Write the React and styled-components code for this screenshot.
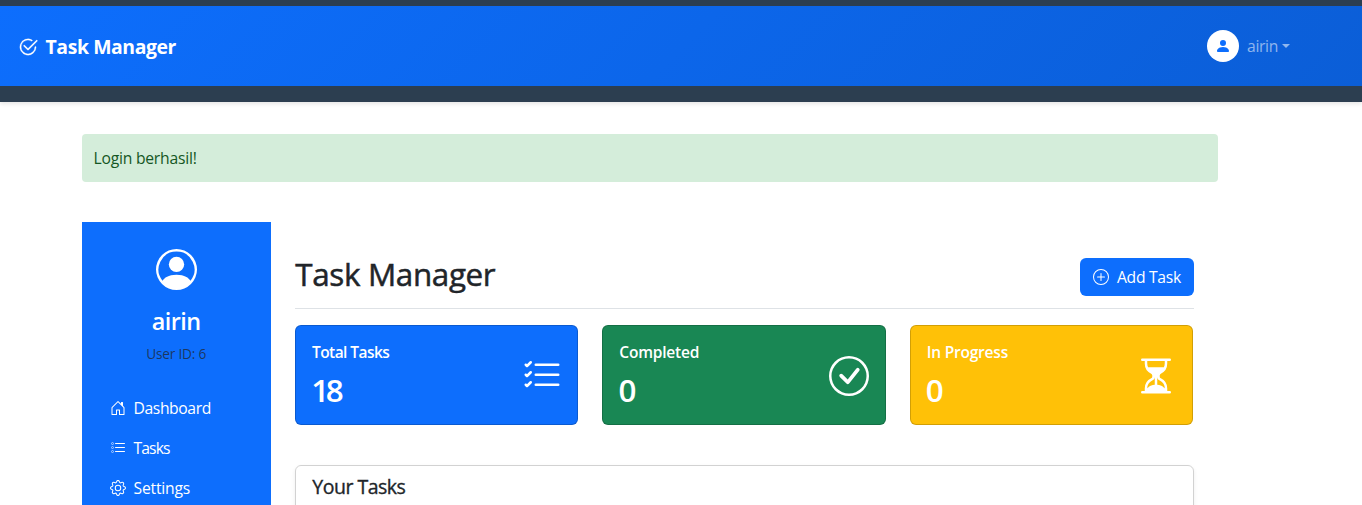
import React from "react";
import styled, { createGlobalStyle } from "styled-components";
import {
  BsCheck2Circle,
  BsPersonFill,
  BsPersonCircle,
  BsHouseDoor,
  BsListTask,
  BsGear,
  BsPlusCircle,
  BsListCheck,
  BsCheckCircle,
  BsHourglassSplit,
} from "react-icons/bs";

const GlobalStyle = createGlobalStyle`
  *, *::before, *::after { box-sizing: border-box; }
  body {
    margin: 0;
    background: #fff;
    color: #212529;
    font-family: "Segoe UI", "Open Sans", "Noto Sans", sans-serif;
    font-size: 15.7px;
    line-height: 24px;
  }
  h1, h2, h3, p { margin: 0; }
  svg { display: block; flex: none; }
`;

const Page = styled.div`
  height: 505px;
  overflow: hidden;
`;

const Header = styled.header`
  height: 102px;
  padding: 6px 0 16px;
  background: #2c3e50;
  box-shadow: 0 2px 4px rgba(0, 0, 0, 0.1);
`;

const Navbar = styled.nav`
  height: 80px;
  padding: 0 72px 0 18px;
  display: flex;
  align-items: center;
  justify-content: space-between;
  color: #fff;
  background: linear-gradient(135deg, #0d6efd, #0b5ed7);
`;

const Brand = styled.a`
  display: flex;
  align-items: center;
  gap: 7.5px;
  padding-top: 2px;
  font-size: 19.4px;
  font-weight: 700;

  svg {
    stroke: currentColor;
    stroke-width: 0.25px;
  }
`;

const UserMenu = styled.div`
  display: flex;
  align-items: center;
  gap: 8px;
  color: rgba(255, 255, 255, 0.55);
`;

const Avatar = styled.span`
  width: 32px;
  height: 32px;
  border-radius: 50%;
  display: grid;
  place-items: center;
  background: #fff;
  color: #0d6efd;
`;

const UserName = styled.span`
  display: flex;
  align-items: center;
  gap: 4px;
  letter-spacing: -0.35px;

  &::after {
    content: "";
    border: 4.5px solid transparent;
    border-top-color: currentColor;
    border-bottom: 0;
  }
`;

const Container = styled.div`
  width: 1136px;
  margin: 32px 0 0 82px;
`;

const Alert = styled.div`
  height: 48px;
  padding: 12px 11.5px;
  border-radius: 4px;
  background: #d4edda;
  color: #155724;
`;

const Columns = styled.div`
  margin-top: 40px;
  display: grid;
  grid-template-columns: 1fr 5fr;
`;

const Sidebar = styled.aside`
  height: 400px;
  padding-top: 26.5px;
  background: #0d6efd;
  color: #fff;
`;

const Profile = styled.div`
  padding-right: 1px;
  display: flex;
  flex-direction: column;
  align-items: center;
`;

const ProfileName = styled.h2`
  margin-top: 17.5px;
  font-size: 23.4px;
  font-weight: 600;
  line-height: 28px;
  letter-spacing: -0.5px;
`;

const ProfileId = styled.p`
  margin-top: 8px;
  font-size: 13.7px;
  line-height: 21px;
  letter-spacing: -0.2px;
  color: rgba(33, 37, 41, 0.75);
`;

const SideNav = styled.nav`
  margin-top: 24px;
  padding-left: 27.5px;
`;

const SideLink = styled.a`
  height: 40px;
  display: flex;
  align-items: center;
  gap: 8px;
`;

const Main = styled.main`
  padding: 36px 24px 0;
`;

const TitleBar = styled.div`
  height: 51px;
  display: flex;
  justify-content: space-between;
  border-bottom: 1px solid #dee2e6;
`;

const Title = styled.h1`
  font-size: 31.4px;
  font-weight: 500;
  line-height: 31px;
  letter-spacing: -0.35px;
  -webkit-text-stroke: 0.5px currentColor;
`;

const AddButton = styled.button`
  width: 114px;
  height: 38px;
  padding: 0 13px;
  display: flex;
  align-items: center;
  gap: 8px;
  border: 0;
  border-radius: 6px;
  background: #0d6efd;
  color: #fff;
  font: inherit;
  white-space: nowrap;
`;

const Stats = styled.div`
  margin: 16px 1px 0 -0.4px;
  display: grid;
  grid-template-columns: repeat(3, 1fr);
  gap: 24px;
`;

const StatCard = styled.section`
  height: 100px;
  padding: 0 15.5px 0 16px;
  display: flex;
  align-items: center;
  justify-content: space-between;
  border: 1px solid rgba(0, 0, 0, 0.175);
  border-radius: 6px;
  background: ${(p) => p.$color};
  background-clip: border-box;
  color: #fff;
`;

const StatText = styled.div`
  padding-top: 2px;
`;

const StatLabel = styled.h3`
  font-size: 15.5px;
  font-weight: 600;
  line-height: 19px;
`;

const StatValue = styled.p`
  margin: 9px 0 0 -0.8px;
  font-size: 31.4px;
  font-weight: 600;
  line-height: 38px;
  letter-spacing: -3.4px;
`;

const StatIcon = styled.span`
  padding-top: 2px;
`;

const TaskPanel = styled.section`
  height: 200px;
  margin-top: 40px;
  padding: 9px 16px;
  border: 1px solid rgba(0, 0, 0, 0.175);
  border-radius: 6px;
  box-shadow: 0 2px 4px rgba(0, 0, 0, 0.075);
`;

const PanelTitle = styled.h2`
  font-size: 19.5px;
  font-weight: 500;
  line-height: 24px;
  letter-spacing: -0.5px;
  -webkit-text-stroke: 0.35px currentColor;
`;

const Label = styled.span`
  letter-spacing: ${(p) => p.$tracking || 0}px;
`;

const links = [
  { label: "Dashboard", Icon: BsHouseDoor, tracking: -0.4 },
  { label: "Tasks", Icon: BsListTask, tracking: -0.9 },
  { label: "Settings", Icon: BsGear, tracking: -0.2 },
];

const stats = [
  { label: "Total Tasks", value: 18, color: "#0d6efd", Icon: BsListCheck, tracking: -0.55 },
  { label: "Completed", value: 0, color: "#198754", Icon: BsCheckCircle, tracking: -0.2 },
  { label: "In Progress", value: 0, color: "#ffc107", Icon: BsHourglassSplit, tracking: -0.2 },
];

export default function App() {
  return (
    <Page>
      <GlobalStyle />
      <Header>
        <Navbar>
          <Brand>
            <BsCheck2Circle size={20} />
            <Label $tracking={-0.4}>Task Manager</Label>
          </Brand>
          <UserMenu>
            <Avatar><BsPersonFill size={16} /></Avatar>
            <UserName>airin</UserName>
          </UserMenu>
        </Navbar>
      </Header>
      <Container>
        <Alert><Label $tracking={-0.23}>Login berhasil!</Label></Alert>
        <Columns>
          <Sidebar>
            <Profile>
              <BsPersonCircle size={41} />
              <ProfileName>airin</ProfileName>
              <ProfileId>User ID: 6</ProfileId>
            </Profile>
            <SideNav>
              {links.map(({ label, Icon, tracking }) => (
                <SideLink key={label}>
                  <Icon size={16} />
                  <Label $tracking={tracking}>{label}</Label>
                </SideLink>
              ))}
            </SideNav>
          </Sidebar>
          <Main>
            <TitleBar>
              <Title>Task Manager</Title>
              <AddButton><BsPlusCircle size={16} /><Label $tracking={-0.3}>Add Task</Label></AddButton>
            </TitleBar>
            <Stats>
              {stats.map(({ label, value, color, Icon, tracking }) => (
                <StatCard key={label} $color={color}>
                  <StatText>
                    <StatLabel><Label $tracking={tracking}>{label}</Label></StatLabel>
                    <StatValue>{value}</StatValue>
                  </StatText>
                  <StatIcon><Icon size={40} /></StatIcon>
                </StatCard>
              ))}
            </Stats>
            <TaskPanel>
              <PanelTitle>Your Tasks</PanelTitle>
            </TaskPanel>
          </Main>
        </Columns>
      </Container>
    </Page>
  );
}
